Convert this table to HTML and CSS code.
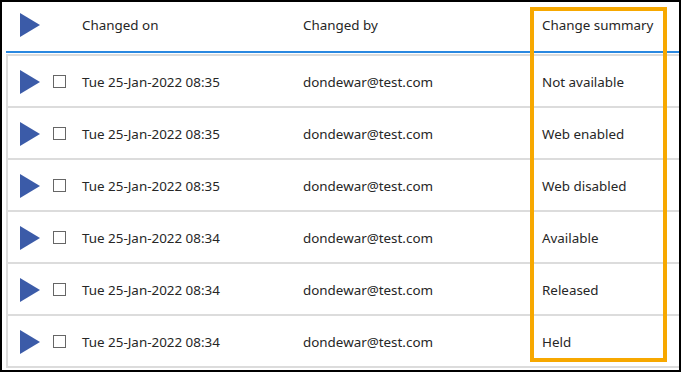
FILE: index.html
```html
<!DOCTYPE html>
<html>
<head>
<meta charset="utf-8">
<link rel="stylesheet" href="styles.css">
</head>
<body>
<div class="frame">
  <div class="table">
    <div class="head">
      <div class="cell tri"><svg width="20" height="24" viewBox="0 0 20 24"><polygon points="0,0 20,12 0,24" fill="#3b5ba8"/></svg></div>
      <div class="cell"></div>
      <div class="cell">Changed on</div>
      <div class="cell">Changed by</div>
      <div class="cell">Change summary</div>
    </div>
    <div class="body">
      <div class="row">
        <div class="cell tri"><svg width="20" height="24" viewBox="0 0 20 24"><polygon points="0,0 20,12 0,24" fill="#3b5ba8"/></svg></div>
        <div class="cell"><span class="check"></span></div>
        <div class="cell">Tue 25-Jan-2022 08:35</div>
        <div class="cell">dondewar@test.com</div>
        <div class="cell">Not available</div>
      </div>
      <div class="row">
        <div class="cell tri"><svg width="20" height="24" viewBox="0 0 20 24"><polygon points="0,0 20,12 0,24" fill="#3b5ba8"/></svg></div>
        <div class="cell"><span class="check"></span></div>
        <div class="cell">Tue 25-Jan-2022 08:35</div>
        <div class="cell">dondewar@test.com</div>
        <div class="cell">Web enabled</div>
      </div>
      <div class="row">
        <div class="cell tri"><svg width="20" height="24" viewBox="0 0 20 24"><polygon points="0,0 20,12 0,24" fill="#3b5ba8"/></svg></div>
        <div class="cell"><span class="check"></span></div>
        <div class="cell">Tue 25-Jan-2022 08:35</div>
        <div class="cell">dondewar@test.com</div>
        <div class="cell">Web disabled</div>
      </div>
      <div class="row">
        <div class="cell tri"><svg width="20" height="24" viewBox="0 0 20 24"><polygon points="0,0 20,12 0,24" fill="#3b5ba8"/></svg></div>
        <div class="cell"><span class="check"></span></div>
        <div class="cell">Tue 25-Jan-2022 08:34</div>
        <div class="cell">dondewar@test.com</div>
        <div class="cell">Available</div>
      </div>
      <div class="row">
        <div class="cell tri"><svg width="20" height="24" viewBox="0 0 20 24"><polygon points="0,0 20,12 0,24" fill="#3b5ba8"/></svg></div>
        <div class="cell"><span class="check"></span></div>
        <div class="cell">Tue 25-Jan-2022 08:34</div>
        <div class="cell">dondewar@test.com</div>
        <div class="cell">Released</div>
      </div>
      <div class="row">
        <div class="cell tri"><svg width="20" height="24" viewBox="0 0 20 24"><polygon points="0,0 20,12 0,24" fill="#3b5ba8"/></svg></div>
        <div class="cell"><span class="check"></span></div>
        <div class="cell">Tue 25-Jan-2022 08:34</div>
        <div class="cell">dondewar@test.com</div>
        <div class="cell">Held</div>
      </div>
    </div>
  </div>
  <div class="highlight"></div>
</div>
</body>
</html>
```

FILE: styles.css
```css
html, body {
  margin: 0;
  padding: 0;
  background: #fff;
}
.frame {
  position: relative;
  width: 681px;
  height: 372px;
  box-sizing: border-box;
  border: 2px solid #000;
  overflow: hidden;
  font-family: "Noto Sans", "Open Sans", sans-serif;
  font-size: 13.4px;
  color: #262626;
}
.table {
  padding-left: 4px;
}
.head,
.row {
  display: grid;
  grid-template-columns: 33px 29px 221px 239px 1fr;
  align-items: center;
}
.head {
  height: 51px;
  box-sizing: border-box;
  padding-left: 14px;
  padding-bottom: 4px;
  border-bottom: 2px solid #2a88e0;
}
.body {
  margin-top: 1px;
  border-top: 2px solid #dcdcdc;
  border-left: 2px solid #dcdcdc;
}
.row {
  height: 50px;
  box-sizing: border-box;
  padding-left: 12px;
  padding-top: 1px;
  border-bottom: 2px solid #dcdcdc;
  height: 52px;
}
.cell {
  white-space: nowrap;
  display: flex;
  align-items: center;
}
.tri svg {
  display: block;
}
.check {
  display: block;
  width: 11px;
  height: 11px;
  border: 1px solid #666;
  background: #fff;
}
.highlight {
  position: absolute;
  left: 528px;
  top: 5px;
  width: 137px;
  height: 355px;
  box-sizing: border-box;
  border: 4px solid #f7a800;
}
```
